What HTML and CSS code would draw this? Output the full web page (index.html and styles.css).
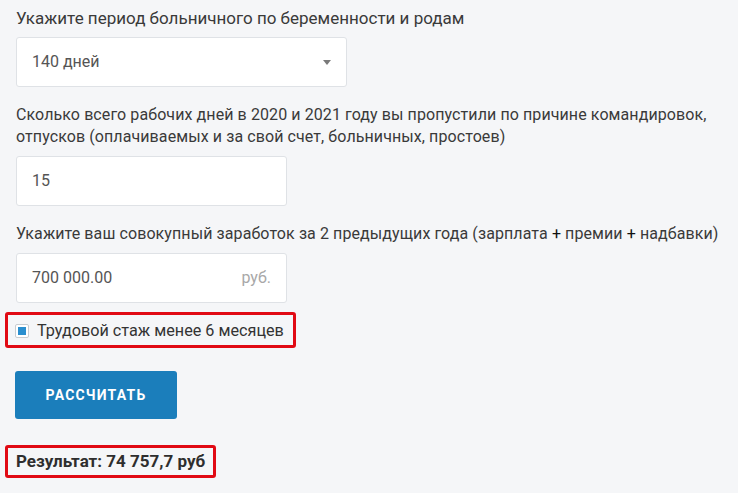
FILE: index.html
```html
<!DOCTYPE html>
<html lang="ru">
<head>
<meta charset="utf-8">
<title>Калькулятор</title>
<link rel="stylesheet" href="styles.css">
</head>
<body>
<form class="calc">
  <div class="field">
    <div class="field-label field-label-lg">Укажите период больничного по беременности и родам</div>
    <div class="control select">
      <span class="control-value">140 дней</span>
      <span class="select-arrow"></span>
    </div>
  </div>
  <div class="field">
    <div class="field-label">Сколько всего рабочих дней в 2020 и 2021 году вы пропустили по причине командировок, отпусков (оплачиваемых и за свой счет, больничных, простоев)</div>
    <div class="control input">
      <span class="control-value">15</span>
    </div>
  </div>
  <div class="field">
    <div class="field-label">Укажите ваш совокупный заработок за 2 предыдущих года (зарплата <span class="plus">+</span> премии <span class="plus">+</span> надбавки)</div>
    <div class="control input">
      <span class="control-value">700 000.00</span>
      <span class="control-suffix">руб.</span>
    </div>
  </div>
  <label class="check highlight">
    <span class="check-box"><span class="check-mark"></span></span>
    <span class="check-text">Трудовой стаж менее 6 месяцев</span>
  </label>
  <div class="actions">
    <button type="button" class="btn">РАССЧИТАТЬ</button>
  </div>
  <div class="result highlight">Результат: 74 757,7 руб</div>
</form>
</body>
</html>
```
FILE: styles.css
```css
html, body {
  margin: 0;
  padding: 0;
  background: #f5f6f8;
}
body {
  font-family: Roboto, "Noto Sans", "Liberation Sans", sans-serif;
  font-size: 16px;
  line-height: 22px;
  color: #3a3a3a;
}
.calc {
  padding: 7px 0 0 16px;
  display: flex;
  flex-direction: column;
  align-items: flex-start;
}
.field {
  margin-bottom: 17px;
  width: 100%;
}
.field-label {
  margin-bottom: 8px;
  letter-spacing: 0.09px;
}
.field-label-lg {
  font-size: 17px;
  letter-spacing: 0;
}
.plus {
  color: #111;
}
.control {
  box-sizing: border-box;
  height: 50px;
  background: #fff;
  border: 1px solid #dfe2e6;
  border-radius: 3px;
  display: flex;
  align-items: center;
  justify-content: space-between;
  padding: 0 15px;
  color: #555;
}
.select {
  width: 331px;
}
.input {
  width: 271px;
}
.select-arrow {
  width: 0;
  height: 0;
  border-left: 4.5px solid transparent;
  border-right: 4.5px solid transparent;
  border-top: 5px solid #7a7a7a;
}
.control-suffix {
  color: #a8a8a8;
}
.highlight {
  border: 3px solid #e10a14;
  border-radius: 3px;
  margin-left: -11px;
}
.check {
  display: flex;
  align-items: center;
  gap: 8px;
  padding: 5px 9px 3px 7px;
  margin-top: -8px;
  font-size: 16.2px;
}
.check-box {
  box-sizing: border-box;
  width: 14px;
  height: 14px;
  border: 1px solid #c9ccd0;
  background: #fff;
  border-radius: 2px;
  display: flex;
  align-items: center;
  justify-content: center;
}
.check-mark {
  width: 8px;
  height: 8px;
  background: #2b8fcf;
}
.check-text {
  color: #333;
}
.actions {
  margin-top: 23px;
}
.btn {
  width: 162px;
  height: 48px;
  margin-left: -1px;
  border: 0;
  border-radius: 3px;
  background: #1b7ebb;
  color: #fff;
  font-family: Roboto, "Noto Sans", "Liberation Sans", sans-serif;
  font-size: 14px;
  font-weight: 700;
  letter-spacing: 1.2px;
  cursor: pointer;
}
.result {
  margin-top: 26px;
  padding: 2px 8px 3px 8px;
  font-size: 17px;
  font-weight: 700;
  color: #2e2e2e;
}
```
